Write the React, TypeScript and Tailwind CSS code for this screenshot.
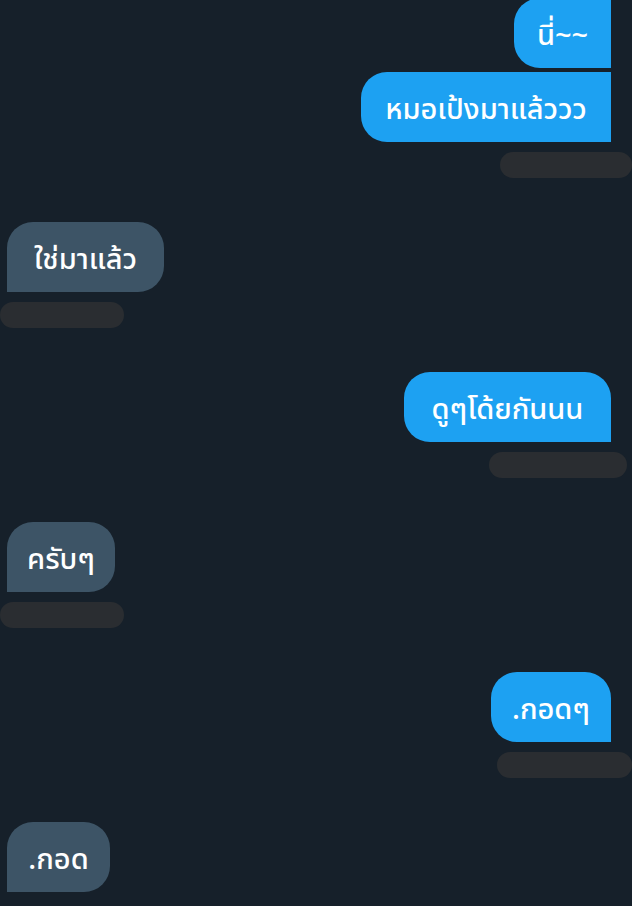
import React from "react";

const font = { fontFamily: '"Noto Sans", "Noto Sans Thai", "DejaVu Sans", sans-serif' };

function Bar({ side, w, mr }: { side: "left" | "right"; w: number; mr: number }) {
  return (
    <div className={`flex ${side === "right" ? "justify-end" : "justify-start"} mt-[10px] h-[26px]`}>
      <div
        className="h-[26px] rounded-full bg-[#2a2d31]"
        style={{ width: w, marginRight: side === "right" ? mr : 0 }}
      />
    </div>
  );
}

const txt = "h-[70px] flex items-center justify-center text-[29px] leading-none font-medium";

export default function App() {
  return (
    <div className="w-[632px] h-[906px] overflow-hidden bg-[#16202a] text-white" style={font}>
      <div className="flex flex-col -mt-[2px]">
        {/* right group 1 */}
        <div className="flex flex-col items-end pr-[21px] gap-[4px]">
          <div className={`${txt} w-[97px] bg-[#1da1f2] rounded-l-[26px]`}>นี่~~</div>
          <div className={`${txt} w-[250px] bg-[#1da1f2] rounded-l-[26px]`}>หมอเป้งมาแล้ววว</div>
        </div>
        <Bar side="right" w={132} mr={0} />

        {/* left 1 */}
        <div className="flex pl-[7px] mt-[44px]">
          <div className={`${txt} w-[157px] bg-[#3d5466] rounded-tl-[26px] rounded-r-[26px]`}>ใช่มาแล้ว</div>
        </div>
        <Bar side="left" w={124} mr={0} />

        {/* right 2 */}
        <div className="flex justify-end pr-[21px] mt-[44px]">
          <div className={`${txt} w-[207px] bg-[#1da1f2] rounded-l-[26px] rounded-tr-[26px]`}>ดูๆโด้ยกันนน</div>
        </div>
        <Bar side="right" w={138} mr={5} />

        {/* left 2 */}
        <div className="flex pl-[7px] mt-[44px]">
          <div className={`${txt} w-[108px] bg-[#3d5466] rounded-tl-[26px] rounded-r-[26px]`}>ครับๆ</div>
        </div>
        <Bar side="left" w={124} mr={0} />

        {/* right 3 */}
        <div className="flex justify-end pr-[21px] mt-[44px]">
          <div className={`${txt} w-[120px] bg-[#1da1f2] rounded-l-[26px] rounded-tr-[26px]`}>.กอดๆ</div>
        </div>
        <Bar side="right" w={135} mr={0} />

        {/* left 3 */}
        <div className="flex pl-[7px] mt-[44px]">
          <div className={`${txt} w-[103px] bg-[#3d5466] rounded-tl-[26px] rounded-r-[26px]`}>.กอด</div>
        </div>
      </div>
    </div>
  );
}
